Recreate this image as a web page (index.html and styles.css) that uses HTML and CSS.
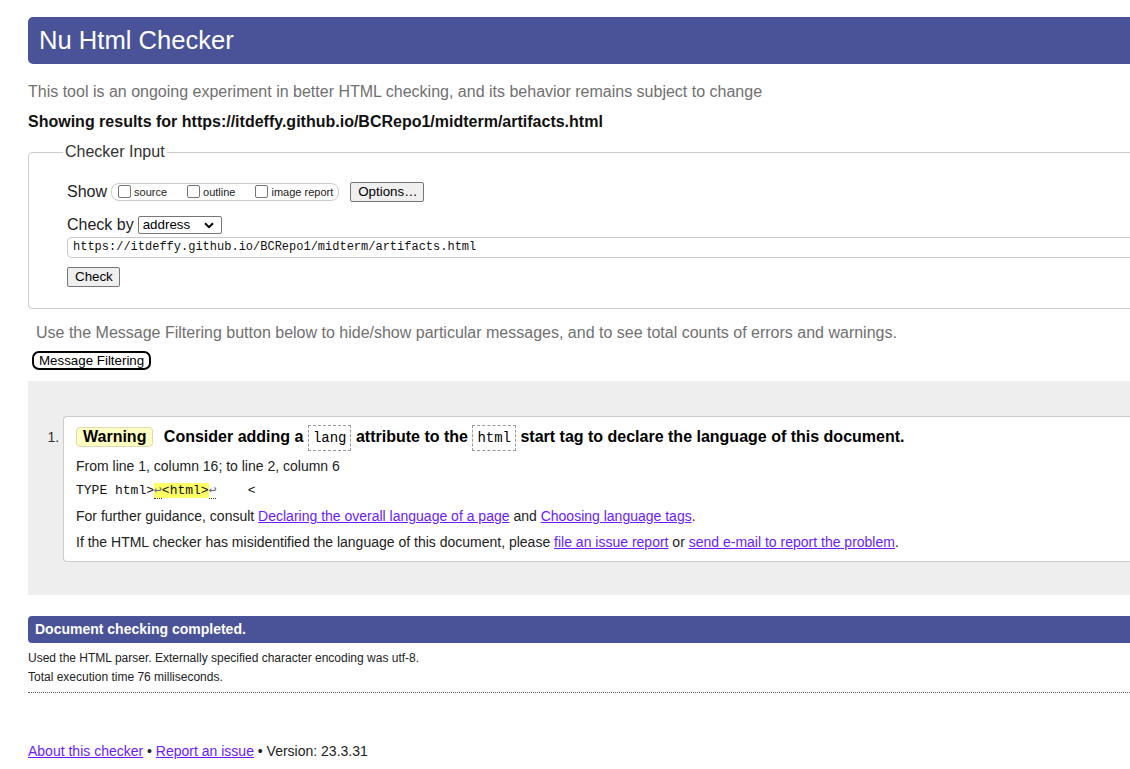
FILE: index.html
```html
<!DOCTYPE html>
<html lang="en">
<head>
<meta charset="utf-8">
<title>Showing results for https://itdeffy.github.io/BCRepo1/midterm/artifacts.html - Nu Html Checker</title>
<link rel="stylesheet" href="styles.css">
</head>
<body>
<div class="page">
  <h1 class="title">Nu Html Checker</h1>
  <p class="intro">This tool is an ongoing experiment in better HTML checking, and its behavior remains subject to change</p>
  <p class="results-for">Showing results for https://itdeffy.github.io/BCRepo1/midterm/artifacts.html</p>

  <form class="checker-form">
    <fieldset class="checker-input">
      <legend>Checker Input</legend>
      <div class="row show-row">
        <span class="row-label">Show</span>
        <div class="show-box">
          <label class="opt"><span class="cb"></span>source</label>
          <label class="opt"><span class="cb"></span>outline</label>
          <label class="opt"><span class="cb"></span>image report</label>
        </div>
        <span class="btn options">Options…</span>
      </div>
      <div class="row checkby-row">
        <span class="row-label">Check by</span>
        <span class="select">address
          <svg class="chev" width="10" height="7" viewBox="0 0 10 7"><path d="M1 1.2 L5 5.2 L9 1.2" fill="none" stroke="#000" stroke-width="2"/></svg>
        </span>
      </div>
      <div class="url">https://itdeffy.github.io/BCRepo1/midterm/artifacts.html</div>
      <span class="btn check">Check</span>
    </fieldset>
  </form>

  <p class="filter-note">Use the Message Filtering button below to hide/show particular messages, and to see total counts of errors and warnings.</p>
  <span class="filter-btn">Message Filtering</span>

  <div class="results">
    <ol class="messages">
      <li class="msg">
        <p class="msg-head"><span class="badge">Warning</span> <span class="msg-text">Consider adding a <code>lang</code> attribute to the <code>html</code> start tag to declare the language of this document.</span></p>
        <p class="loc">From line 1, column 16; to line 2, column 6</p>
        <p class="extract">TYPE html&gt;<mark><span class="lf">↩</span>&lt;html&gt;</mark><span class="lf">↩</span>    &lt;</p>
        <p class="info">For further guidance, consult <a href="#">Declaring the overall language of a page</a> and <a href="#">Choosing language tags</a>.</p>
        <p class="info">If the HTML checker has misidentified the language of this document, please <a href="#">file an issue report</a> or <a href="#">send e-mail to report the problem</a>.</p>
      </li>
    </ol>
  </div>

  <p class="done">Document checking completed.</p>
  <p class="stats first">Used the HTML parser. Externally specified character encoding was utf-8.</p>
  <p class="stats">Total execution time 76 milliseconds.</p>
  <div class="rule"></div>

  <p class="footer"><a href="#">About this checker</a> • <a href="#">Report an issue</a> • Version: 23.3.31</p>
</div>
</body>
</html>
```

FILE: styles.css
```css
html { overflow: hidden; }
body {
  margin: 0;
  padding: 17px 0 0 28px;
  font-family: "Liberation Sans", Arial, sans-serif;
  color: #000;
  background: #fff;
}
.page { width: 1150px; }

.title {
  margin: 0;
  height: 47px;
  line-height: 47px;
  padding: 0 11px;
  font-size: 25.6px;
  font-weight: normal;
  color: #fff;
  background: #4a5298;
  border-radius: 5px 0 0 5px;
}
.intro {
  margin: 19px 0 0;
  font-size: 16px;
  line-height: 18px;
  color: #707070;
}
.results-for {
  margin: 12px 0 0;
  font-size: 16px;
  line-height: 18px;
  font-weight: bold;
  color: #111;
}

.checker-form { margin: 12px 0 0; }
.checker-input {
  margin: 0;
  padding: 0 0 21px 38px;
  border: 1px solid #ccc;
  border-radius: 4px;
  min-width: 0;
}
.checker-input legend {
  margin-left: -4px;
  padding: 0 2px;
  font-size: 16px;
  line-height: 18px;
  color: #333;
}
.row {
  display: flex;
  align-items: center;
}
.row-label {
  font-size: 16px;
  color: #222;
  margin-right: 4px;
}
.show-row { margin-top: 21px; height: 20px; }
.show-box {
  display: flex;
  align-items: center;
  height: 16px;
  padding: 0 5px 0 6px;
  border: 1px solid #ccc;
  border-radius: 8px;
  gap: 20px;
}
.opt {
  display: flex;
  align-items: center;
  font-size: 11px;
  color: #222;
}
.cb {
  display: inline-block;
  width: 11px;
  height: 11px;
  border: 1px solid #767676;
  border-radius: 2px;
  background: #fff;
  margin: -2px 3px 0 0;
}
.btn {
  display: inline-block;
  box-sizing: border-box;
  height: 20px;
  line-height: 18px;
  padding: 0 7px;
  font-size: 13.33px;
  color: #000;
  background: #efefef;
  border: 1px solid #767676;
  border-radius: 2px;
}
.options { margin-left: 11px; width: 74px; text-align: center; }

.checkby-row { margin-top: 14px; height: 18px; }
.select {
  position: relative;
  display: inline-block;
  box-sizing: border-box;
  width: 84px;
  height: 18px;
  line-height: 16px;
  padding-left: 4px;
  font-size: 13.33px;
  border: 1px solid #767676;
  border-radius: 2px;
  background: #fff;
}
.chev { position: absolute; right: 7px; top: 5px; }

.url {
  box-sizing: border-box;
  margin-top: 3px;
  height: 21px;
  line-height: 19px;
  padding-left: 5px;
  font-family: "Liberation Mono", "DejaVu Sans Mono", monospace;
  font-size: 12px;
  color: #111;
  border: 1px solid #c8c8c8;
  border-radius: 5px 0 0 5px;
  border-right: none;
}
.check { margin-top: 9px; width: 53px; text-align: center; }

.filter-note {
  margin: 15px 0 0 8px;
  font-size: 16px;
  line-height: 18px;
  color: #707070;
}
.filter-btn {
  display: inline-block;
  box-sizing: border-box;
  margin: 9px 0 0 4px;
  height: 19px;
  line-height: 15px;
  padding: 0 5px;
  font-size: 13.33px;
  border: 2px solid #000;
  border-radius: 7px;
  background: #fff;
}

.results {
  margin-top: 11px;
  background: #eee;
  padding: 35px 0 33px 35px;
}
.messages {
  margin: 0;
  padding: 0;
  color: #333;
}
.msg {
  background: #fff;
  border: 1px solid #ccc;
  border-right: none;
  border-radius: 4px 0 0 4px;
  padding: 10px 0 10px 12px;
  font-size: 14px;
  color: #222;
}
.msg::marker { color: #333; font-size: 14px; }
.msg p { margin: 0; }
.msg-head {
  line-height: 20px;
  font-size: 16px;
  font-weight: bold;
  color: #000;
}
.badge {
  display: inline-block;
  padding: 0 6px;
  line-height: 18px;
  background: #ffffc4;
  border: 1px solid #dcdcb0;
  border-radius: 4px;
  margin-right: 6px;
}
code {
  font-family: "Liberation Mono", "DejaVu Sans Mono", monospace;
  font-size: 14px;
  font-weight: normal;
  padding: 4px 4px;
  border: 1px dashed #999;
}
.msg .loc { margin-top: 9px; line-height: 18px; }
.msg .extract {
  margin-top: 7px;
  line-height: 18px;
  font-family: "Liberation Mono", "DejaVu Sans Mono", monospace;
  font-size: 13px;
  white-space: pre;
  color: #111;
}
mark { background: #ffff66; color: #111; }
.lf {
  color: #667;
  border-bottom: 1px dotted #333;
}
.msg .info { line-height: 18px; margin-top: 7px; }
.msg .info + .info { margin-top: 8px; }
a { color: #6a1bff; text-decoration: underline; }

.done {
  margin: 21px 0 0;
  height: 27px;
  line-height: 27px;
  padding-left: 7px;
  font-size: 14px;
  font-weight: bold;
  color: #fff;
  background: #4a5298;
  border-radius: 4px 0 0 4px;
}
.stats {
  margin: 5px 0 0;
  font-size: 12px;
  line-height: 14px;
  color: #222;
}
.stats.first { margin-top: 8px; }
.rule {
  margin-top: 8px;
  border-top: 1px dotted #555;
}
.footer {
  margin: 49px 0 0;
  font-size: 14px;
  line-height: 18px;
  color: #222;
}
```
